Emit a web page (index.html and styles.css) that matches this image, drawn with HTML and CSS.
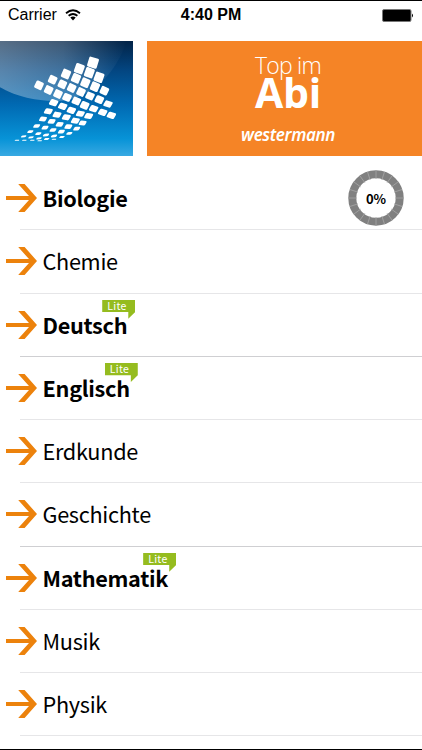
FILE: index.html
```html
<!DOCTYPE html>
<html lang="de">
<head>
    <meta charset="utf-8">
    <title>Top im Abi</title>
    <link rel="stylesheet" href="styles.css">
</head>
<body>
    <!-- Shared shapes -->
    <svg class="defs" width="0" height="0">
        <symbol id="arrow" viewBox="0 0 31 28">
            <path d="M0 12.1H23L12.2 0H18.6L31 14L18.6 28H12.2L23 16.1H0Z"/>
        </symbol>
    </svg>

    <div class="app">
        <div class="status-bar">
            <div class="carrier">
                <span>Carrier</span>
                <svg width="16" height="12" viewBox="0 0 16 12">
                    <path d="M1 4.2Q8 -1.6 15 4.2M3.6 6.8Q8 3.2 12.4 6.8" fill="none" stroke="#000" stroke-width="1.8"/>
                    <path d="M5.3 8.6Q8 6.6 10.7 8.6L8 11.5Z"/>
                </svg>
            </div>
            <div class="time">4:40 PM</div>
            <div class="battery">
                <svg width="32" height="13" viewBox="0 0 32 13">
                    <rect x="0.5" y="0.5" width="28.5" height="12" rx="1.5" fill="#000" stroke="#777"/>
                    <path d="M30 4.5Q32 6.5 30 8.5Z"/>
                </svg>
            </div>
        </div>

        <div class="header">
            <svg class="logo" viewBox="0 15 399 345" preserveAspectRatio="none">
                <defs>
                    <linearGradient id="sky" x1="0" y1="0" x2="0" y2="1">
                        <stop offset="0" stop-color="#022347"/>
                        <stop offset="0.25" stop-color="#034580"/>
                        <stop offset="0.55" stop-color="#0069b2"/>
                        <stop offset="0.85" stop-color="#0793d7"/>
                        <stop offset="1" stop-color="#38a9e2"/>
                    </linearGradient>
                    <linearGradient id="shine" x1="0" y1="0" x2="1" y2="0">
                        <stop offset="0" stop-color="#fff" stop-opacity="0.34"/>
                        <stop offset="0.5" stop-color="#fff" stop-opacity="0.24"/>
                        <stop offset="1" stop-color="#fff" stop-opacity="0"/>
                    </linearGradient>
                </defs>
                <rect y="15" width="399" height="345" fill="url(#sky)"/>
                <path d="M0 15H380C350 110 270 195 170 195C90 195 40 176 0 154Z" fill="url(#shine)"/>
                <g id="dots" fill="#fff"></g>
            </svg>
            <div class="banner">
                <div class="banner-top">Top im</div>
                <div class="banner-abi">Abi</div>
                <div class="banner-brand">westermann</div>
            </div>
        </div>

        <ul class="subjects" id="subjects"></ul>
    </div>

    <script>
        const subjects = [
            { name: 'Biologie', owned: true, progress: 0 },
            { name: 'Chemie' },
            { name: 'Deutsch', owned: true, lite: true, strong: true },
            { name: 'Englisch', owned: true, lite: true },
            { name: 'Erdkunde' },
            { name: 'Geschichte', strong: true },
            { name: 'Mathematik', owned: true, lite: true },
            { name: 'Musik' },
            { name: 'Physik' }
        ];

        // Logo tiles: width, height, rotation, skew, then the centers
        const tiles = [
            [30, 31, 17, 0, [[279,80]]],
            [27, 29, 20, 0, [[238,98],[268,110],[297,124]]],
            [25, 27, 23, 0, [[198,114],[228,127],[256,140],[285,152]]],
            [24, 24, 25, 0, [[117,148],[158,131],[146,162],[187,145],[174,174],[215,156],[243,168],[313,164]]],
            [24, 22, 22, -4, [[201,184],[229,195],[270,180],[254,208],[298,191]]],
            [23, 19, 18, -12, [[161,200],[188,211],[214,223],[281,218],[324,204],[308,229],[334,238]]],
            [22, 17, 10, -18, [[145,226],[171,236],[199,244],[226,254],[241,233],[266,240]]],
            [20, 14, 4, -24, [[129,249],[155,256],[179,265],[205,272],[248,261]]],
            [18, 11, 0, -30, [[110,270],[135,275],[159,282],[184,287],[230,278]]],
            [17, 8, -2, -34, [[91,287],[115,293],[138,297],[162,300],[208,292]]],
            [15, 6, -3, -36, [[71,301],[93,304],[117,307],[140,309],[186,303]]],
            [13, 3, 0, -36, [[51,313],[73,313],[97,313],[119,314],[162,310]]]
        ];

        function renderLogo() {
            let html = '';
            tiles.forEach(([w, h, angle, skew, centers]) => {
                centers.forEach(([x, y]) => {
                    html += `<rect x="${-w / 2}" y="${-h / 2}" width="${w}" height="${h}" rx="${Math.min(4, h / 2)}" transform="translate(${x} ${y}) rotate(${angle}) skewX(${skew})"/>`;
                });
            });
            document.getElementById('dots').innerHTML = html;
        }

        function progressRing(value) {
            let ticks = '';
            for (let i = 0; i < 20; i++) {
                ticks += `<path d="M28 0.5V9" transform="rotate(${i * 18} 28 28)"/>`;
            }
            return `
                <div class="progress">
                    <svg width="56" height="56" viewBox="0 0 56 56">
                        <circle cx="28" cy="28" r="23.7" fill="none" stroke="#808080" stroke-width="8"/>
                        <g stroke="#a4a4a4" stroke-width="0.8">${ticks}</g>
                    </svg>
                    <span class="progress-value">${value}%</span>
                </div>`;
        }

        function renderSubjects() {
            document.getElementById('subjects').innerHTML = subjects.map(s => `
                <li class="subject${s.owned ? ' owned' : ''}${s.strong ? ' strong' : ''}">
                    <svg class="arrow"><use href="#arrow"/></svg>
                    <span class="name">${s.name}${s.lite ? '<span class="lite">Lite</span>' : ''}</span>
                    ${s.progress !== undefined ? progressRing(s.progress) : ''}
                </li>`).join('');
        }

        renderLogo();
        renderSubjects();
    </script>
</body>
</html>
```
FILE: styles.css
```css
* {
    box-sizing: border-box;
}

body {
    margin: 0;
    background-color: #fff;
    color: #000;
    font-family: "Noto Sans CJK SC", "Noto Sans", sans-serif;
}

.defs {
    display: block;
}

.app {
    width: 422px;
    height: 750px;
    overflow: hidden;
    border-top: 1px solid #000;
    border-bottom: 1px solid #000;
}

/* Status bar */
.status-bar {
    display: grid;
    grid-template-columns: 1fr auto 1fr;
    align-items: center;
    height: 28px;
    padding: 0 8px;
    font-family: "Liberation Sans", Arial, sans-serif;
    font-size: 16px;
}

.carrier {
    display: flex;
    align-items: center;
    gap: 8px;
}

.time {
    font-weight: bold;
}

.battery {
    display: flex;
    justify-content: flex-end;
}

/* Header */
.header {
    display: flex;
    gap: 14px;
    height: 115px;
    margin-top: 12px;
}

.logo {
    width: 133px;
    height: 115px;
}

.banner {
    flex: 1;
    padding: 9px 0 0 7px;
    background-color: #f58426;
    color: #fff;
    text-align: center;
    font-family: "Noto Sans", sans-serif;
}

.banner-top {
    height: 23px;
    line-height: 31px;
    font-family: "Open Sans", sans-serif;
    font-size: 23px;
    font-weight: 300;
    letter-spacing: -0.8px;
}

.banner-abi {
    height: 43px;
    line-height: 38px;
    font-family: "Open Sans", sans-serif;
    font-size: 41px;
    font-weight: bold;
    letter-spacing: -0.2px;
}

.banner-brand {
    line-height: 37px;
    font-size: 17px;
    font-style: italic;
    font-weight: 600;
    letter-spacing: -0.4px;
}

/* Subject list */
.subjects {
    margin: 11px 0 0;
    padding: 0;
    list-style: none;
}

.subject {
    display: flex;
    align-items: center;
    height: 63.25px;
    padding: 0 18px 1px 6px;
    background: linear-gradient(#e6e6e8, #e6e6e8) 20px 100% / 100% 1px no-repeat;
}

.subject.strong {
    background-image: linear-gradient(#cfcfd2, #cfcfd2);
}

.arrow {
    width: 31px;
    height: 28px;
    fill: #ec820c;
}

.name {
    position: relative;
    margin-left: 5.5px;
    line-height: 34px;
    font-size: 21.7px;
    letter-spacing: -0.3px;
}

.owned .name {
    font-weight: bold;
}

/* Green speech bubble over the end of the name */
.lite {
    position: absolute;
    top: -8px;
    right: -8px;
    width: 33px;
    height: 19px;
    padding-left: 5px;
    background-color: #95bc1f;
    clip-path: polygon(0 0, 100% 0, 100% 65%, 79% 100%, 79% 65%, 0 65%);
    color: #fff;
    line-height: 12px;
    font-size: 10.5px;
    font-weight: normal;
    letter-spacing: 0.3px;
}

.progress {
    display: grid;
    place-items: center;
    margin-left: auto;
}

.progress > * {
    grid-area: 1 / 1;
}

.progress-value {
    font-size: 13px;
    font-weight: bold;
}
```
